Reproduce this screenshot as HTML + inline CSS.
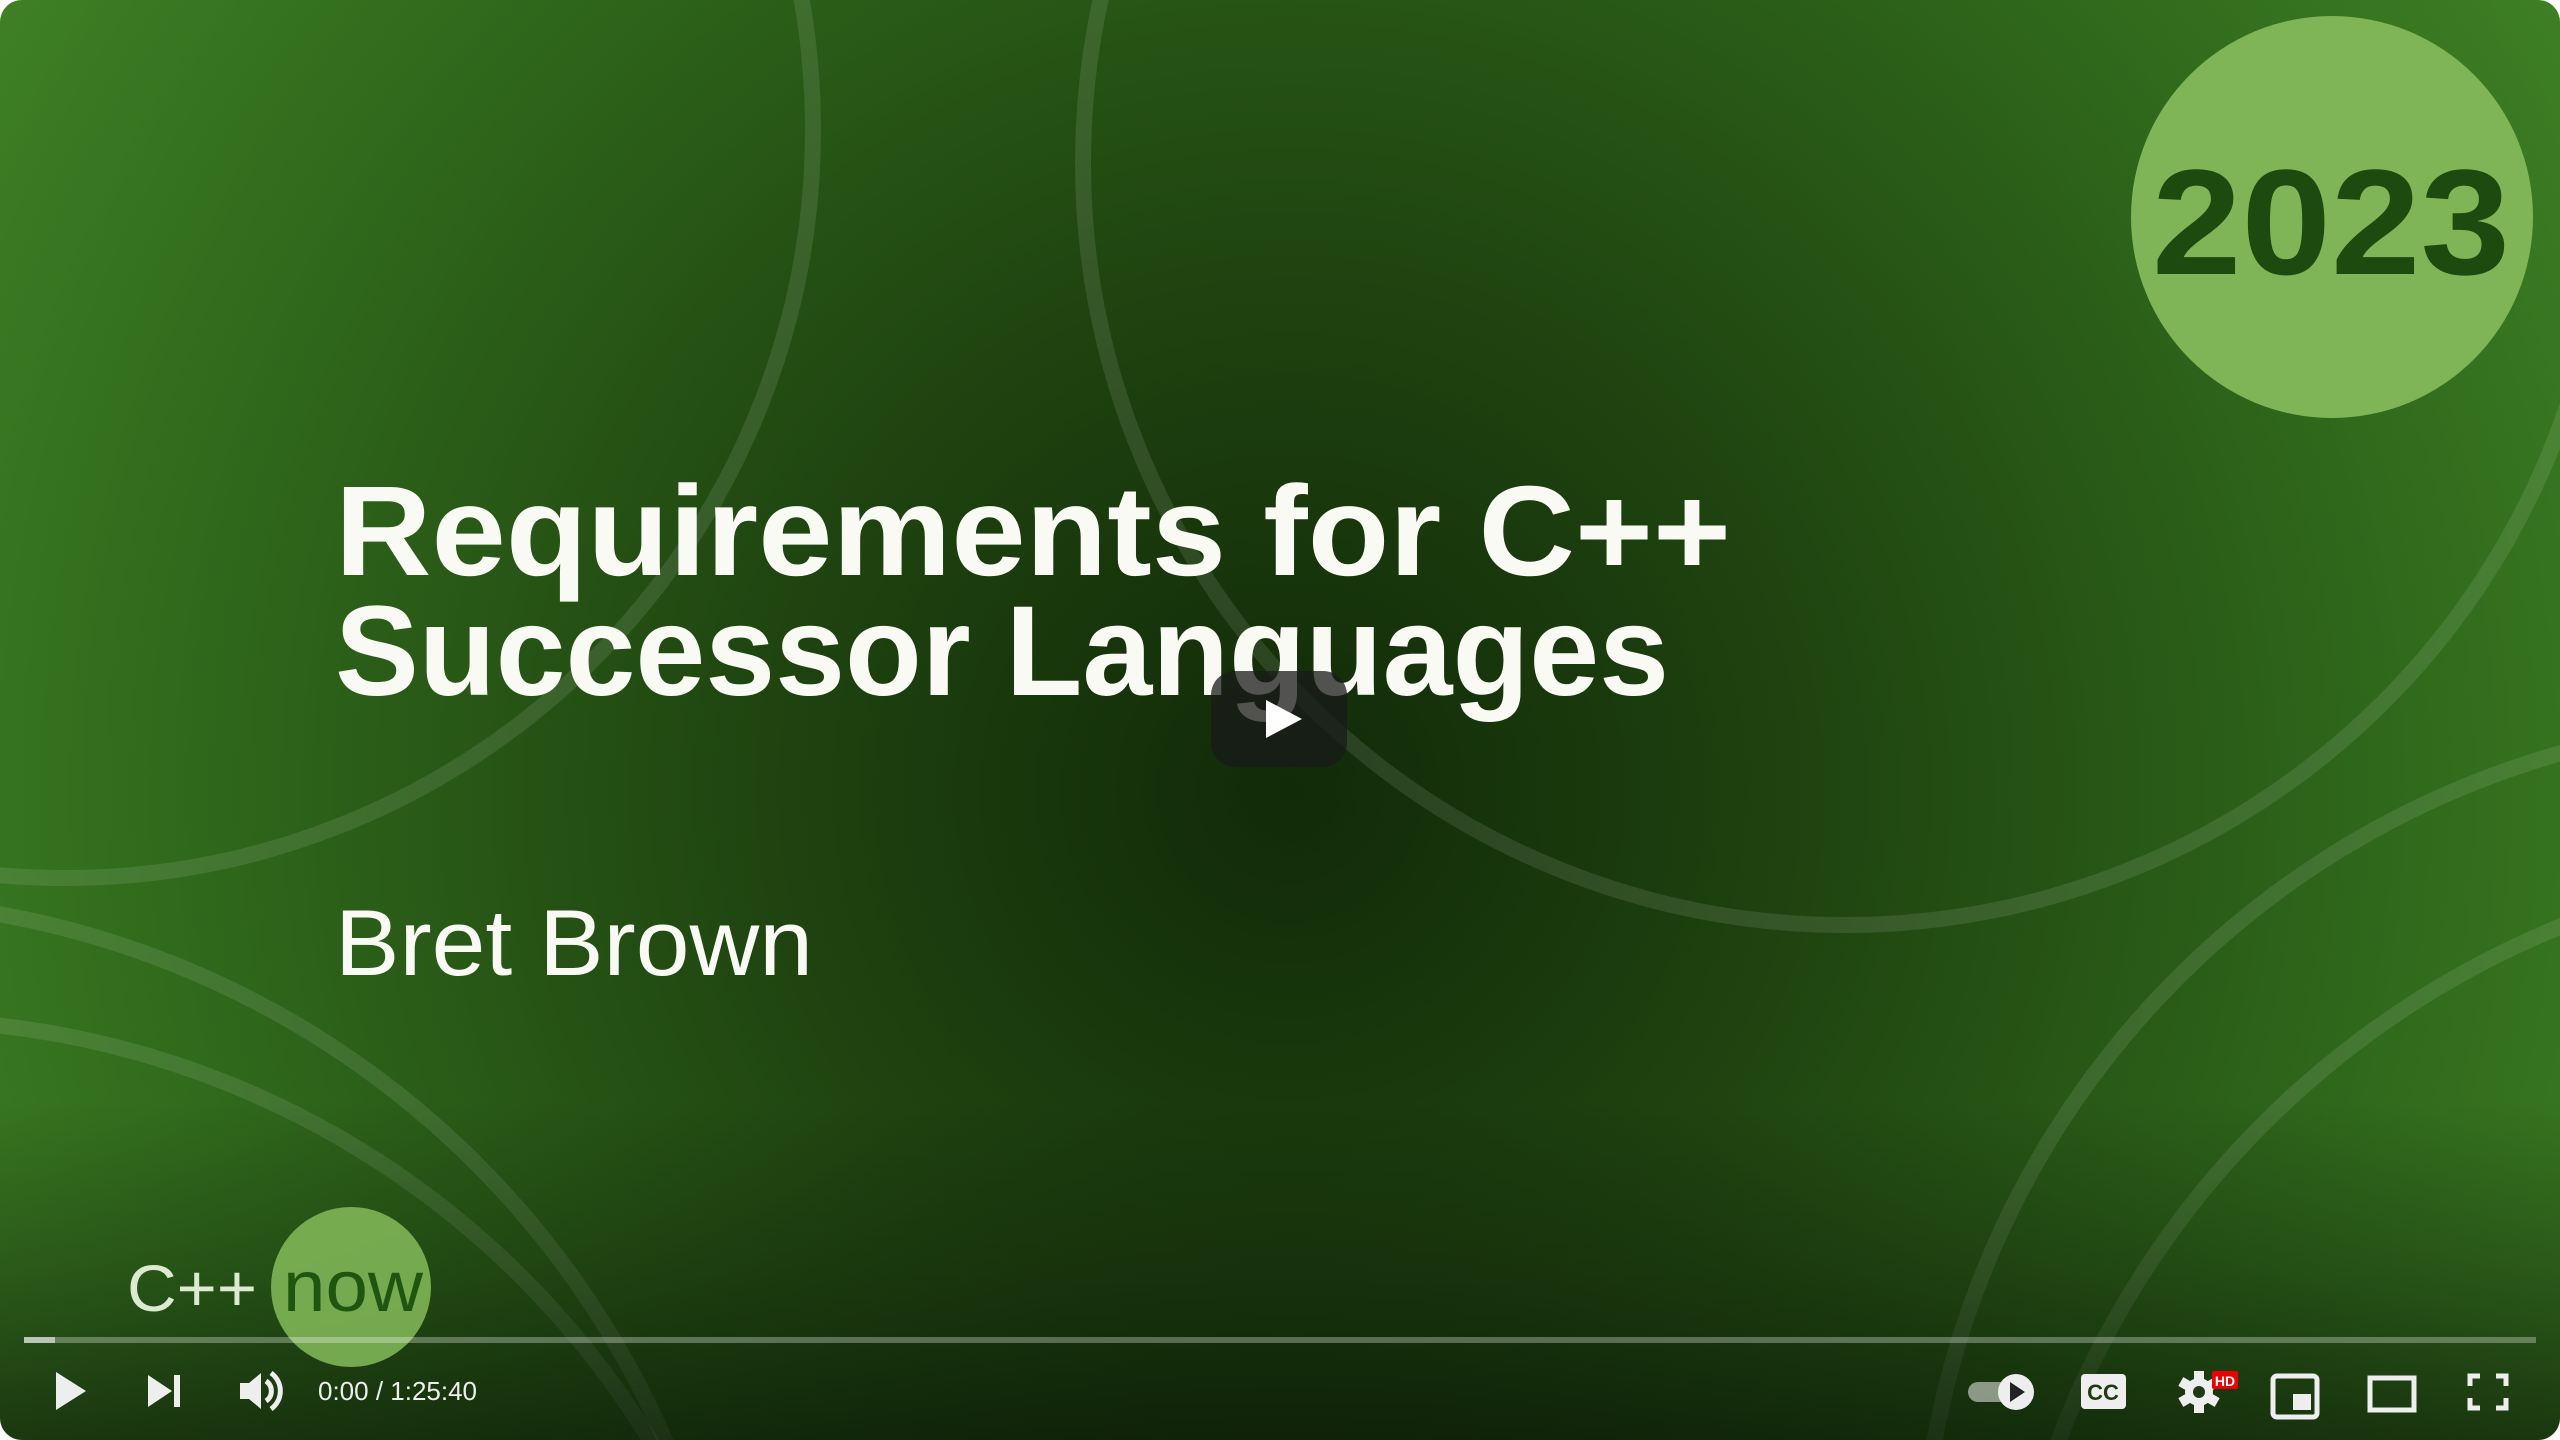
<!DOCTYPE html>
<html><head><meta charset="utf-8"><style>
html,body{margin:0;padding:0;background:#fff;width:2560px;height:1440px;overflow:hidden}
svg{display:block;position:absolute;left:0;top:0}
</style></head><body>
<svg width="2560" height="1440" viewBox="0 0 2560 1440" xmlns="http://www.w3.org/2000/svg">
<defs>
<radialGradient id="bg" cx="1290" cy="790" r="1500" gradientUnits="userSpaceOnUse">
<stop offset="0" stop-color="#112a08"/>
<stop offset="0.35" stop-color="#1f4410"/>
<stop offset="0.75" stop-color="#306a1c"/>
<stop offset="1" stop-color="#3e7f24"/>
</radialGradient>
<linearGradient id="bot" x1="0" y1="1100" x2="0" y2="1440" gradientUnits="userSpaceOnUse">
<stop offset="0" stop-color="#000" stop-opacity="0"/>
<stop offset="0.5" stop-color="#000" stop-opacity="0.25"/>
<stop offset="1" stop-color="#000" stop-opacity="0.55"/>
</linearGradient>
<clipPath id="clip"><rect x="0" y="0" width="2560" height="1440" rx="22"/></clipPath>
</defs>
<g clip-path="url(#clip)">
<rect width="2560" height="1440" fill="url(#bg)"/>
<g fill="none" stroke="#ffffff" stroke-opacity="0.1" stroke-width="16">
<circle cx="65" cy="130" r="748"/>
<circle cx="1845" cy="163" r="762"/>
<circle cx="-160" cy="1800" r="900"/>
<circle cx="-100" cy="1900" r="880"/>
<circle cx="2800" cy="1600" r="880"/>
<circle cx="2900" cy="1760" r="900"/>
</g>
<circle cx="2332" cy="217" r="201" fill="#7fb556"/>
<text x="2152" y="274" font-family="Liberation Sans, sans-serif" font-weight="bold" font-size="150" fill="#1c4a0f" textLength="358" lengthAdjust="spacingAndGlyphs">2023</text>
<g font-family="Liberation Sans, sans-serif" fill="#fafaf5">
<text x="335" y="575" font-weight="bold" font-size="128" textLength="1396" lengthAdjust="spacingAndGlyphs">Requirements for C++</text>
<text x="335" y="695" font-weight="bold" font-size="128" textLength="1334" lengthAdjust="spacingAndGlyphs">Successor Languages</text>
<text x="335" y="975" font-size="94" textLength="478" lengthAdjust="spacingAndGlyphs">Bret Brown</text>
</g>
<rect x="0" y="1100" width="2560" height="340" fill="url(#bot)"/>
<circle cx="351" cy="1287" r="80" fill="#7fb556" fill-opacity="0.9"/>
<text x="127" y="1311" font-family="Liberation Sans, sans-serif" font-size="66" fill="#dcebd0" textLength="130" lengthAdjust="spacingAndGlyphs">C++</text>
<text x="283" y="1311" font-family="Liberation Sans, sans-serif" font-size="72" fill="#1f5510" textLength="140" lengthAdjust="spacingAndGlyphs">now</text>
<!-- center play button -->
<rect x="1211" y="671" width="136" height="96" rx="24" fill="#1a1a1a" fill-opacity="0.75"/>
<path d="M1266 700 L1302 719 L1266 738 Z" fill="#fff"/>
<!-- progress -->
<rect x="24" y="1337" width="2512" height="6" fill="#fff" fill-opacity="0.3"/>
<rect x="24" y="1337" width="31" height="6" fill="#fff" fill-opacity="0.55"/>
<!-- controls -->
<g fill="#eeeeee">
<path d="M56 1372 L86 1391 L56 1410 Z"/>
<path d="M148 1375 L172 1391 L148 1407 Z"/><rect x="174" y="1375" width="6" height="32"/>
<path d="M240 1383 L249 1383 L261 1373 L261 1409 L249 1399 L240 1399 Z"/>
</g>
<path d="M266 1381 a12 12 0 0 1 0 20 M271 1373 a22 22 0 0 1 0 36" fill="none" stroke="#eee" stroke-width="5"/>
<text x="318" y="1400" font-family="Liberation Sans, sans-serif" font-size="26" fill="#eee">0:00 / 1:25:40</text>
<!-- autoplay toggle -->
<rect x="1968" y="1382" width="56" height="20" rx="10" fill="#fff" fill-opacity="0.5"/>
<circle cx="2016" cy="1392" r="18" fill="#eee"/>
<path d="M2010 1382 L2025 1392 L2010 1402 Z" fill="#222"/>
<!-- CC -->
<rect x="2081" y="1374" width="45" height="35" rx="4" fill="#eee"/>
<text x="2103" y="1400" text-anchor="middle" font-family="Liberation Sans, sans-serif" font-weight="bold" font-size="22" fill="#1e3a12">CC</text>
<!-- gear -->
<g transform="translate(2199,1392)" fill="#eee">
<circle r="14"/>
<g><rect x="-5" y="-21" width="10" height="42"/><rect x="-5" y="-21" width="10" height="42" transform="rotate(60)"/><rect x="-5" y="-21" width="10" height="42" transform="rotate(120)"/></g>
<circle r="6" fill="#1e3a12"/>
</g>
<rect x="2212" y="1371" width="26" height="18" rx="2" fill="#e00"/>
<text x="2225" y="1386" text-anchor="middle" font-family="Liberation Sans, sans-serif" font-weight="bold" font-size="14" fill="#fff">HD</text>
<!-- miniplayer -->
<rect x="2273" y="1376" width="44" height="41" rx="4" fill="none" stroke="#eee" stroke-width="5"/>
<rect x="2293" y="1394" width="18" height="16" fill="#eee"/>
<!-- theater -->
<rect x="2370" y="1378" width="44" height="32" fill="none" stroke="#eee" stroke-width="5"/>
<!-- fullscreen -->
<path d="M2470 1386 V1376 H2480 M2496 1376 H2506 V1386 M2506 1398 V1408 H2496 M2480 1408 H2470 V1398" fill="none" stroke="#eee" stroke-width="5"/>
</g>
</svg>
</body></html>
